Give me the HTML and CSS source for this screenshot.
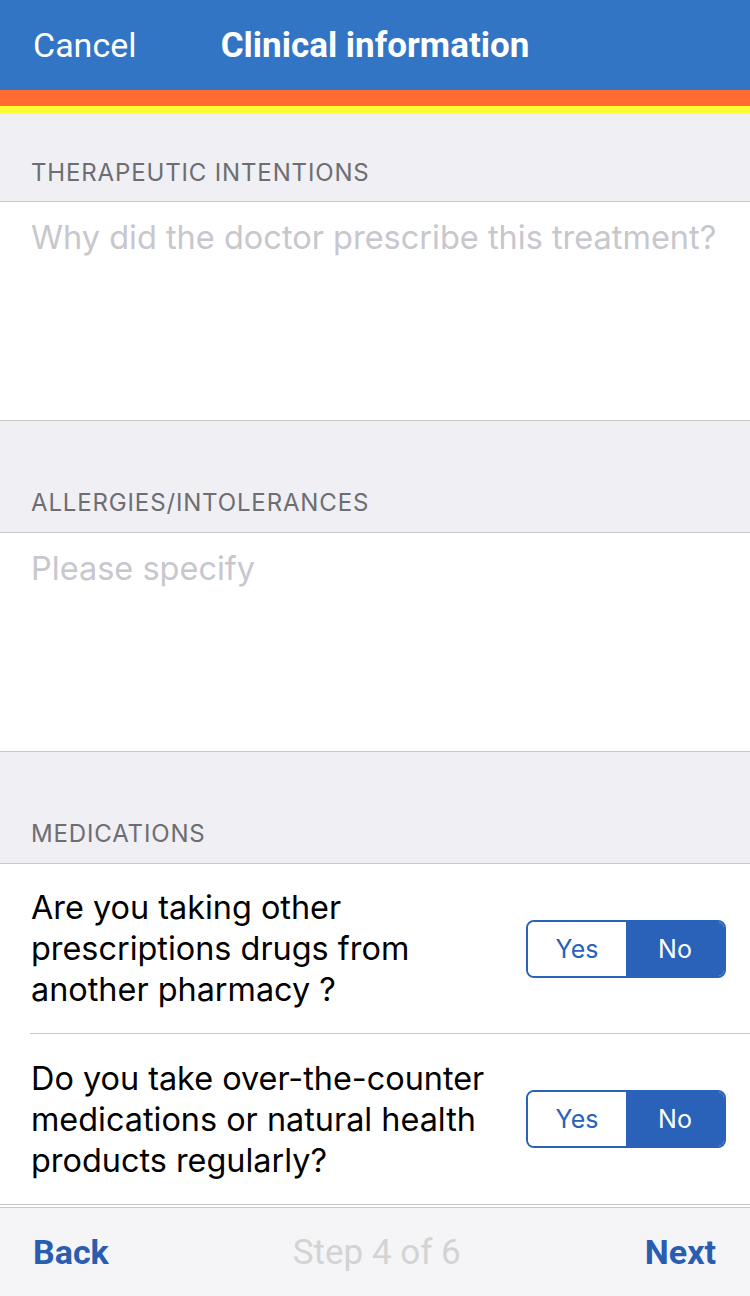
FILE: index.html
```html
<!DOCTYPE html>
<html>
<head>
<meta charset="utf-8">
<link rel="stylesheet" href="styles.css">
</head>
<body>
<div class="app">
  <header class="navbar">
    <span class="nav-cancel">Cancel</span>
    <span class="nav-title">Clinical information</span>
  </header>
  <div class="stripe-orange"></div>
  <div class="stripe-yellow"></div>

  <main class="content">
    <div class="section-header first">THERAPEUTIC INTENTIONS</div>
    <div class="text-area"><span class="placeholder">Why did the doctor prescribe this treatment?</span></div>

    <div class="section-header">ALLERGIES/INTOLERANCES</div>
    <div class="text-area"><span class="placeholder">Please specify</span></div>

    <div class="section-header">MEDICATIONS</div>
    <div class="rows">
      <div class="row">
        <div class="row-text">Are you taking other prescriptions drugs from another pharmacy ?</div>
        <div class="segment">
          <span class="seg-item">Yes</span>
          <span class="seg-item active">No</span>
        </div>
      </div>
      <div class="row">
        <div class="row-text">Do you take over-the-counter medications or natural health products regularly?</div>
        <div class="segment">
          <span class="seg-item">Yes</span>
          <span class="seg-item active">No</span>
        </div>
      </div>
    </div>
  </main>

  <footer class="toolbar-wrap">
    <div class="toolbar">
      <span class="tb-back">Back</span>
      <span class="tb-step">Step 4 of 6</span>
      <span class="tb-next">Next</span>
    </div>
  </footer>
</div>
</body>
</html>
```

FILE: styles.css
```css
* { box-sizing: border-box; }
html, body { margin: 0; padding: 0; }
body {
  width: 750px;
  height: 1296px;
  overflow: hidden;
  background: #efeff4;
  font-family: Inter, "Noto Sans", "Liberation Sans", sans-serif;
}
.app {
  display: flex;
  flex-direction: column;
  height: 1296px;
}
.app > * { flex-shrink: 0; }
.navbar {
  height: 90px;
  background: #3375c5;
  position: relative;
  display: flex;
  align-items: center;
  justify-content: center;
  color: #fff;
  font-family: Roboto, "Liberation Sans", sans-serif;
}
.nav-cancel {
  position: absolute;
  left: 33px;
  top: 25px;
  font-size: 34px;
  line-height: 40px;
}
.nav-title {
  font-size: 35px;
  font-weight: 700;
  line-height: 40px;
  margin-top: 2px;
}
.stripe-orange { height: 16px; background: #ff6b30; }
.stripe-yellow { height: 8px; background: #ffff33; }

.content {
  flex: 1 1 auto;
  display: flex;
  flex-direction: column;
}
.section-header {
  padding: 68px 31px 15px;
  font-size: 24px;
  line-height: 28px;
  color: #6d6d72;
  letter-spacing: 0.85px;
  border-bottom: 1px solid #c8c7cc;
}
.section-header.first { padding-top: 45px; padding-bottom: 14px; }
.text-area {
  background: #fff;
  height: 219px;
  padding: 16px 31px 0;
  border-bottom: 1px solid #c8c7cc;
}
.placeholder {
  font-size: 32.5px;
  line-height: 40px;
  color: #c7c7cd;
}
.rows {
  background: #fff;
  border-bottom: 1px solid #c8c7cc;
}
.row {
  display: flex;
  align-items: center;
  justify-content: space-between;
  height: 170px;
  margin-left: 30px;
  padding-right: 24px;
  border-bottom: 1px solid #c8c7cc;
}
.row:last-child { border-bottom: none; }
.row-text {
  width: 470px;
  font-size: 32.4px;
  line-height: 41px;
  color: #000;
  padding-left: 1px;
}
.segment {
  display: flex;
  width: 200px;
  height: 58px;
  border: 2px solid #2962b8;
  border-radius: 8px;
  overflow: hidden;
}
.seg-item {
  flex: 1;
  display: flex;
  align-items: center;
  justify-content: center;
  font-size: 25px;
  color: #2962b8;
  background: #fff;
}
.seg-item.active {
  background: #2962b8;
  color: #fff;
}
.toolbar-wrap {
  background: #fff;
  padding-top: 2px;
}
.toolbar {
  height: 89px;
  background: #f5f5f7;
  border-top: 1px solid #c8c7cc;
  display: flex;
  align-items: center;
  justify-content: space-between;
  padding: 0 34px 0 33px;
  font-family: Roboto, "Liberation Sans", sans-serif;
  font-size: 35px;
}
.tb-back, .tb-next {
  color: #2a5db0;
  font-weight: 700;
  font-size: 34px;
}
.tb-step {
  color: #d3d3d3;
}
```
